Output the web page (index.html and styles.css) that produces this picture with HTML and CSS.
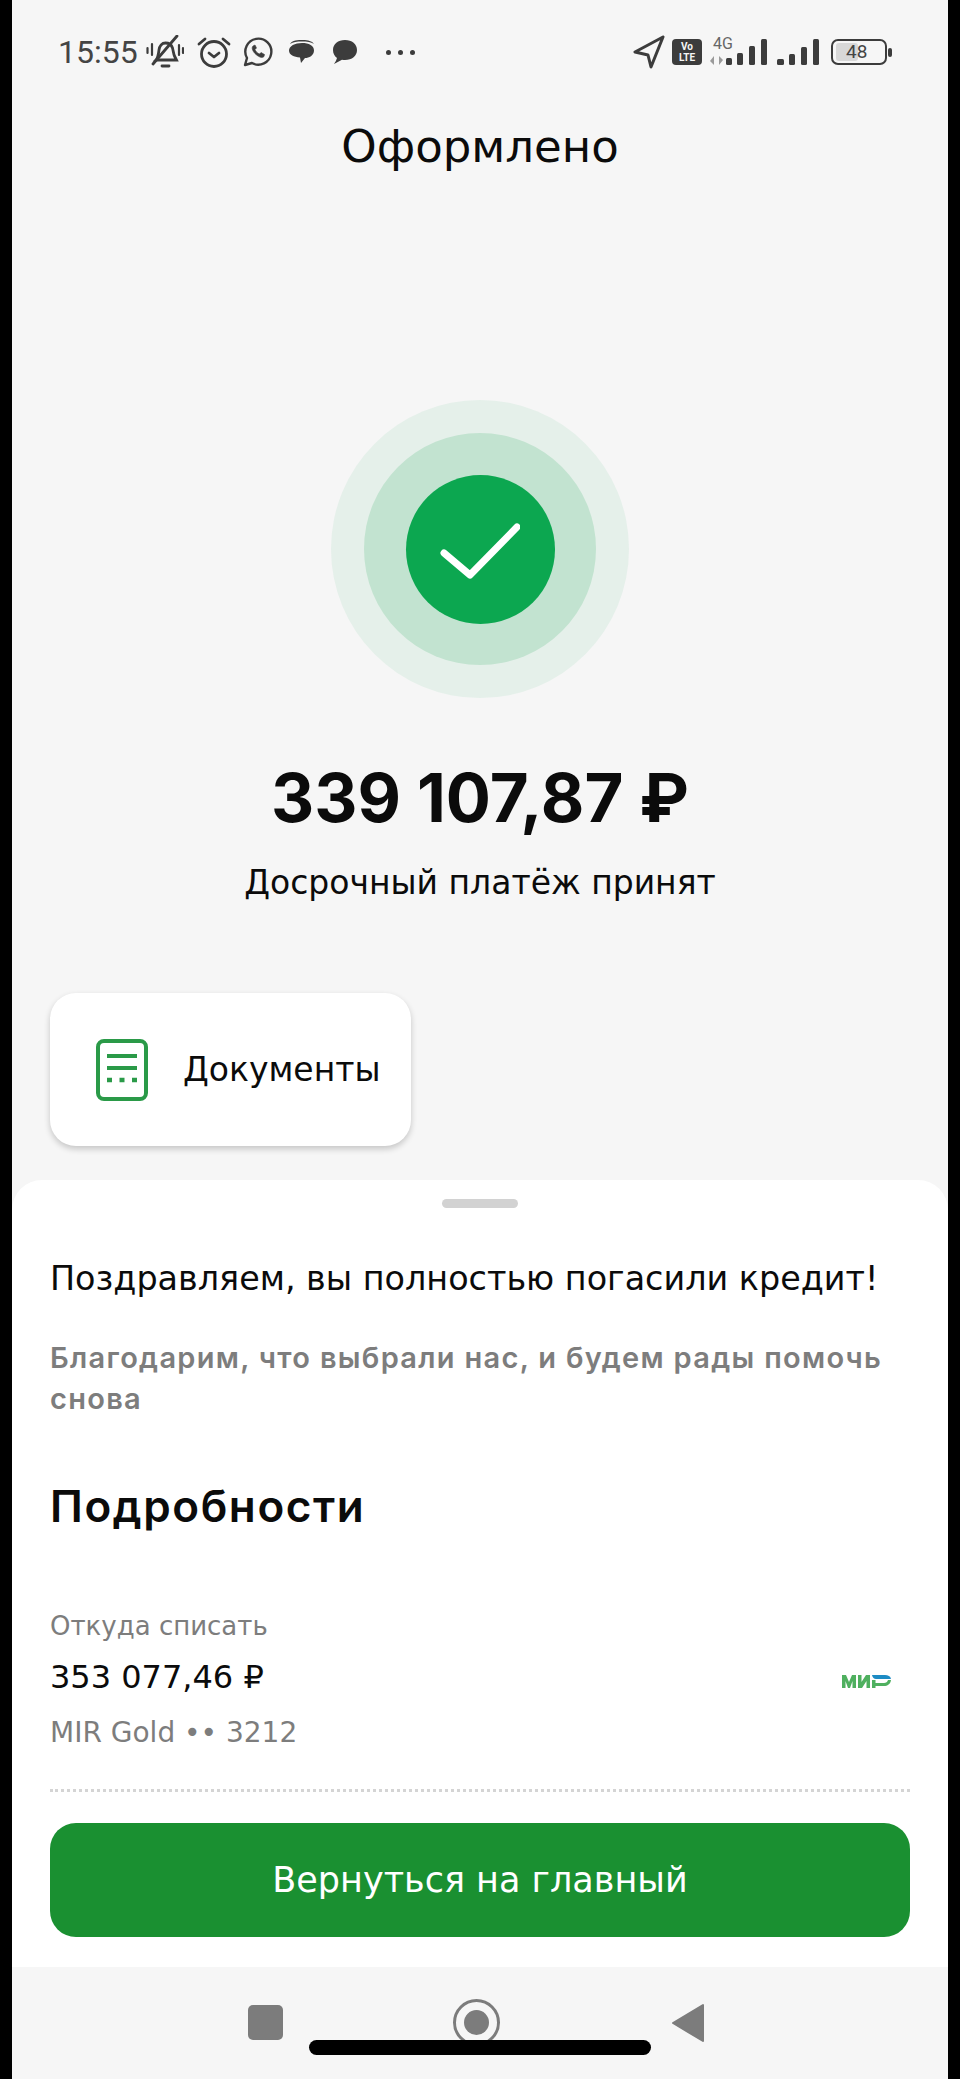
FILE: index.html
```html
<!DOCTYPE html>
<html lang="ru">
<head>
    <meta charset="UTF-8">
    <meta name="viewport" content="width=device-width, initial-scale=1.0">
    <title>Оформлено</title>
    <link rel="stylesheet" href="styles.css">
</head>
<body>
    <div class="phone">
        <div class="status">
            <div class="status-left">
                <span class="time">15:55</span>
                <svg class="ic-bell" width="38" height="34" viewBox="0 0 38 34" fill="none" stroke="#3c3c3c" stroke-width="2.8" stroke-linecap="round">
                    <path d="M10 25c2-2 2.500-6 3-10 .5-4 3-7 6.500-7s6 2 7 5c.8 3 1 6 2 8l2 4z"/>
                    <path d="M7 29L31 1"/>
                    <path d="M16 31h7"/>
                    <path d="M1.500 13v5M6 9v11M33 10v10M37 13v5" stroke-width="2.200"/>
                </svg>
                <svg class="ic-alarm" width="34" height="34" viewBox="0 0 34 34" fill="none" stroke="#3c3c3c" stroke-width="2.8" stroke-linecap="round" stroke-linejoin="round">
                    <circle cx="17" cy="19" r="12.500"/>
                    <path d="M12 18l5 4 5-4"/>
                    <path d="M2 9l6-5M32 9l-6-5"/>
                </svg>
                <svg class="ic-wa" width="30" height="30" viewBox="0 0 30 30" fill="none" stroke="#3c3c3c" stroke-width="2.400" stroke-linejoin="round">
                    <path d="M2 28l2-7A13 13 0 1 1 9 26z"/>
                    <path d="M10 9c-2 2 0 6 3 8.500s6 4 8 2l.5-2-3.500-2-1.500 1.500c-2-.5-4-3-4.500-4.500l1.500-1.500-1.500-3z" fill="#3c3c3c" stroke-width="0.600"/>
                </svg>
                <svg class="ic-msg" width="28" height="28" viewBox="0 0 28 28" fill="#3c3c3c">
                    <path d="M2 6c2-4 8-4 13-4s9 1 11 4c-3-2-7-2.500-12-2.500S5 4 2 6z"/>
                    <path d="M14 5c7 0 12 2.500 12 7.500S21 20 17 20l-4 5-1-5.500C6 19 1 17 1 12.500S7 5 14 5z"/>
                </svg>
                <svg class="ic-msg2" width="26" height="26" viewBox="0 0 26 26" fill="#3c3c3c">
                    <path d="M13 1c7 0 12 4 12 10s-5 10-12 10c-1 0-2 0-3-.2L2 25c1.500-2 2.500-4 3-6-2.500-2-4-4.500-4-8C1 5 6 1 13 1z"/>
                </svg>
                <span class="more"><i></i><i></i><i></i></span>
            </div>
            <div class="status-right">
                <svg width="33" height="34" viewBox="0 0 33 34" fill="none" stroke="#3c3c3c" stroke-width="3" stroke-linejoin="round">
                    <path d="M30 2L2 17l13 3 3 12z"/>
                </svg>
                <span class="volte">Vo<br>LTE</span>
                <span class="net">
                    <span class="net-label">4G</span>
                    <svg class="net-arrows" width="14" height="9" viewBox="0 0 14 9" fill="#9a9a9a"><path d="M4 0v9L0 5zM9 0l4 4-4 5z"/></svg>
                </span>
                <svg class="bars" width="41" height="28" viewBox="0 0 41 28" fill="#3c3c3c">
                    <rect x="0" y="20" width="6" height="7" rx="1.500"/>
                    <rect x="11" y="15" width="6" height="12" rx="1.500"/>
                    <rect x="23" y="8" width="6" height="19" rx="1.500"/>
                    <rect x="35" y="1" width="6" height="26" rx="1.500"/>
                </svg>
                <svg class="bars bars-2" width="42" height="28" viewBox="0 0 42 28" fill="#3c3c3c">
                    <rect x="0" y="21" width="7" height="6" rx="1.500"/>
                    <rect x="12" y="16" width="6" height="11" rx="1.500"/>
                    <rect x="24" y="9" width="6" height="18" rx="1.500"/>
                    <rect x="36" y="1" width="6" height="26" rx="1.500"/>
                </svg>
                <span class="battery">
                    <span class="battery-fill"></span>
                    <span class="battery-num">48</span>
                </span>
                <span class="battery-cap"></span>
            </div>
        </div>

        <h1 class="title">Оформлено</h1>

        <div class="top">
            <div class="ring-outer">
                <div class="ring-mid">
                    <div class="ring-inner">
                        <svg width="80" height="60" viewBox="0 0 80 60" fill="none" stroke="#fff" stroke-width="7" stroke-linecap="round" stroke-linejoin="round">
                            <path d="M4 34L30 56L77 8"/>
                        </svg>
                    </div>
                </div>
            </div>
            <div class="amount">339 107,87 ₽</div>
            <div class="subtitle">Досрочный платёж принят</div>
        </div>

        <div class="docs-row">
            <div class="docs-card">
                <svg width="52" height="62" viewBox="0 0 52 62" fill="none" stroke="#2a9a48" stroke-width="4">
                    <rect x="2" y="2" width="48" height="58" rx="6"/>
                    <path d="M11 17h30M11 29h30"/>
                    <path d="M11 41h5M23.500 41h5M36 41h5" stroke-width="4.500"/>
                </svg>
                <span>Документы</span>
            </div>
        </div>

        <div class="sheet">
            <div class="handle"></div>
            <p class="congrats">Поздравляем, вы полностью погасили кредит!</p>
            <p class="thanks">Благодарим, что выбрали нас, и будем рады помочь снова</p>
            <h2 class="details">Подробности</h2>
            <div class="source">
                <div>
                    <div class="source-label">Откуда списать</div>
                    <div class="source-sum">353 077,46 ₽</div>
                    <div class="source-card">MIR Gold •• 3212</div>
                </div>
                <svg class="mir" width="50" height="15" viewBox="0 0 50 15">
                    <path fill="#4fb05f" d="M0 14V1h4l3 7 3-7h4v13h-3.500V7L8 14H6L3.500 7v7zM16 14V1h3.500v7l4.500-7h4v13h-3.500V7L20 14zM30 14V6h3.500v3H42c2 0 3.500-1 4-3h3c-.5 4-3.500 6-7 6h-8.500v2z"/>
                    <path fill="#1d8bc4" d="M30 1h13c3 0 5.500 1 6 4H34c-2 0-3.500-1.500-4-4z"/>
                </svg>
            </div>
            <div class="dots"></div>
            <button class="back" type="button">Вернуться на главный</button>
        </div>

        <div class="nav">
            <span class="nav-square"></span>
            <span class="nav-home"><span></span></span>
            <svg width="34" height="40" viewBox="0 0 34 40" fill="#7c7c7c" stroke="#7c7c7c" stroke-width="2" stroke-linejoin="round">
                <path d="M32 2v36L2 20z"/>
            </svg>
            <div class="home-bar"></div>
        </div>
    </div>
</body>
</html>
```

FILE: styles.css
```css
* {
    padding: 0;
    margin: 0;
    box-sizing: border-box;
}
body {
    background-color: #000;
    font-family: "DejaVu Sans", sans-serif;
    color: #0b0b0b;
}
.phone {
    position: relative;
    width: 936px;
    height: 2079px;
    margin: 0 12px;
    background-color: #f6f6f6;
    display: flex;
    flex-direction: column;
    overflow: hidden;
}

/* status bar */
.status {
    height: 100px;
    padding: 34px 0 0 46px;
    display: flex;
    justify-content: space-between;
    align-items: flex-start;
}
.status-left {
    display: flex;
    align-items: center;
    height: 36px;
}
.time {
    font-family: Roboto, sans-serif;
    font-size: 32px;
    color: #444;
    margin-right: 8px;
}
.ic-alarm {
    margin-left: 13px;
}
.ic-wa {
    margin-left: 12px;
}
.ic-msg {
    margin-left: 15px;
}
.ic-msg2 {
    margin-left: 16px;
}
.more {
    display: flex;
    gap: 7px;
    margin-left: 28px;
}
.more i {
    width: 5px;
    height: 5px;
    border-radius: 50%;
    background-color: #3c3c3c;
}
.status-right {
    display: flex;
    align-items: center;
    height: 36px;
    padding-right: 56px;
}
.volte {
    width: 30px;
    height: 26px;
    margin-left: 6px;
    border-radius: 4px;
    background-color: #3c3c3c;
    color: #f6f6f6;
    font-family: Roboto, sans-serif;
    font-size: 10px;
    font-weight: 700;
    line-height: 11px;
    text-align: center;
    padding-top: 2px;
}
.net {
    position: relative;
    width: 14px;
    height: 30px;
    margin-left: 8px;
}
.net-label {
    position: absolute;
    left: 3px;
    top: -3px;
    font-family: Roboto, sans-serif;
    font-size: 16px;
    color: #666;
}
.net-arrows {
    position: absolute;
    left: 0;
    top: 19px;
}
.bars {
    margin-left: 2px;
}
.bars-2 {
    margin-left: 10px;
}
.battery {
    position: relative;
    width: 56px;
    height: 26px;
    margin-left: 12px;
    border: 2px solid #3c3c3c;
    border-radius: 7px;
}
.battery-fill {
    position: absolute;
    left: 3px;
    top: 2px;
    bottom: 2px;
    width: 22px;
    border-radius: 3px;
    background-color: #d8d8d8;
}
.battery-num {
    position: absolute;
    left: 13px;
    top: 0;
    font-family: Roboto, sans-serif;
    font-size: 19px;
    line-height: 22px;
    color: #444;
}
.battery-cap {
    width: 4px;
    height: 9px;
    margin-left: 1px;
    border-radius: 2px;
    background-color: #3c3c3c;
}

.title {
    text-align: center;
    font-size: 45px;
    font-weight: 400;
    line-height: 60px;
    margin-top: 17px;
    margin-bottom: 1px;
}

/* result block */
.top {
    display: flex;
    flex-direction: column;
    align-items: center;
    margin-top: 222px;
}
.ring-outer {
    width: 298px;
    height: 298px;
    border-radius: 50%;
    background-color: #e5f0ea;
    display: flex;
    align-items: center;
    justify-content: center;
}
.ring-mid {
    width: 232px;
    height: 232px;
    border-radius: 50%;
    background-color: #c2e3d0;
    display: flex;
    align-items: center;
    justify-content: center;
}
.ring-inner {
    width: 149px;
    height: 149px;
    border-radius: 50%;
    background-color: #0ca750;
    display: flex;
    align-items: center;
    justify-content: center;
}
.amount {
    font-family: Inter, sans-serif;
    font-size: 67px;
    font-weight: 700;
    line-height: 90px;
    margin-top: 55px;
}
.subtitle {
    font-size: 33px;
    line-height: 46px;
    margin-top: 17px;
}

.docs-row {
    padding: 87px 0 0 38px;
}
.docs-card {
    width: 361px;
    height: 153px;
    border-radius: 26px;
    background-color: #fff;
    box-shadow: 0 3px 6px rgba(0, 0, 0, 0.2);
    display: flex;
    align-items: center;
    padding-left: 46px;
    gap: 35px;
    font-size: 33px;
}

/* bottom sheet */
.sheet {
    flex: 1;
    margin-top: 34px;
    background-color: #fff;
    border-radius: 30px 30px 0 0;
    padding: 19px 38px 0;
}
.handle {
    width: 76px;
    height: 9px;
    margin: 0 auto;
    border-radius: 5px;
    background-color: #d2d2d2;
}
.congrats {
    font-size: 33.400px;
    line-height: 46px;
    margin-top: 48px;
    white-space: nowrap;
}
.thanks {
    font-family: Inter, sans-serif;
    font-size: 29px;
    font-weight: 600;
    letter-spacing: 1.300px;
    line-height: 41px;
    color: #7d7d7d;
    margin-top: 35px;
}
.details {
    font-family: Inter, sans-serif;
    font-size: 44px;
    font-weight: 600;
    letter-spacing: 1.600px;
    line-height: 60px;
    margin-top: 57px;
}
.source {
    display: flex;
    justify-content: space-between;
    align-items: center;
    margin-top: 72px;
    padding-right: 18px;
}
.source-label {
    font-size: 26px;
    line-height: 36px;
    color: #7d7d7d;
}
.source-sum {
    font-size: 32px;
    line-height: 46px;
    margin-top: 10px;
}
.source-card {
    font-size: 28px;
    line-height: 40px;
    color: #7d7d7d;
    margin-top: 13px;
}
.mir {
    margin-top: 2px;
}
.dots {
    margin-top: 36px;
    border-top: 3px dotted #d4d4d4;
}
.back {
    display: block;
    width: 860px;
    height: 114px;
    margin-top: 31px;
    border: none;
    border-radius: 26px;
    background-color: #1a9031;
    color: #fff;
    font-family: inherit;
    font-size: 35px;
    cursor: pointer;
}

/* nav bar */
.nav {
    position: relative;
    height: 112px;
    flex-shrink: 0;
    padding: 38px 0 0 236px;
    display: flex;
    align-items: flex-start;
}
.nav-square {
    width: 35px;
    height: 35px;
    border-radius: 5px;
    background-color: #7c7c7c;
}
.nav-home {
    width: 47px;
    height: 47px;
    margin-left: 170px;
    margin-top: -6px;
    border: 3px solid #7c7c7c;
    border-radius: 50%;
    display: flex;
    align-items: center;
    justify-content: center;
}
.nav-home span {
    width: 25px;
    height: 25px;
    border-radius: 50%;
    background-color: #7c7c7c;
}
.nav svg {
    margin-left: 171px;
    margin-top: -2px;
}
.home-bar {
    position: absolute;
    left: 297px;
    top: 73px;
    width: 342px;
    height: 15px;
    border-radius: 8px;
    background-color: #000;
}
```
